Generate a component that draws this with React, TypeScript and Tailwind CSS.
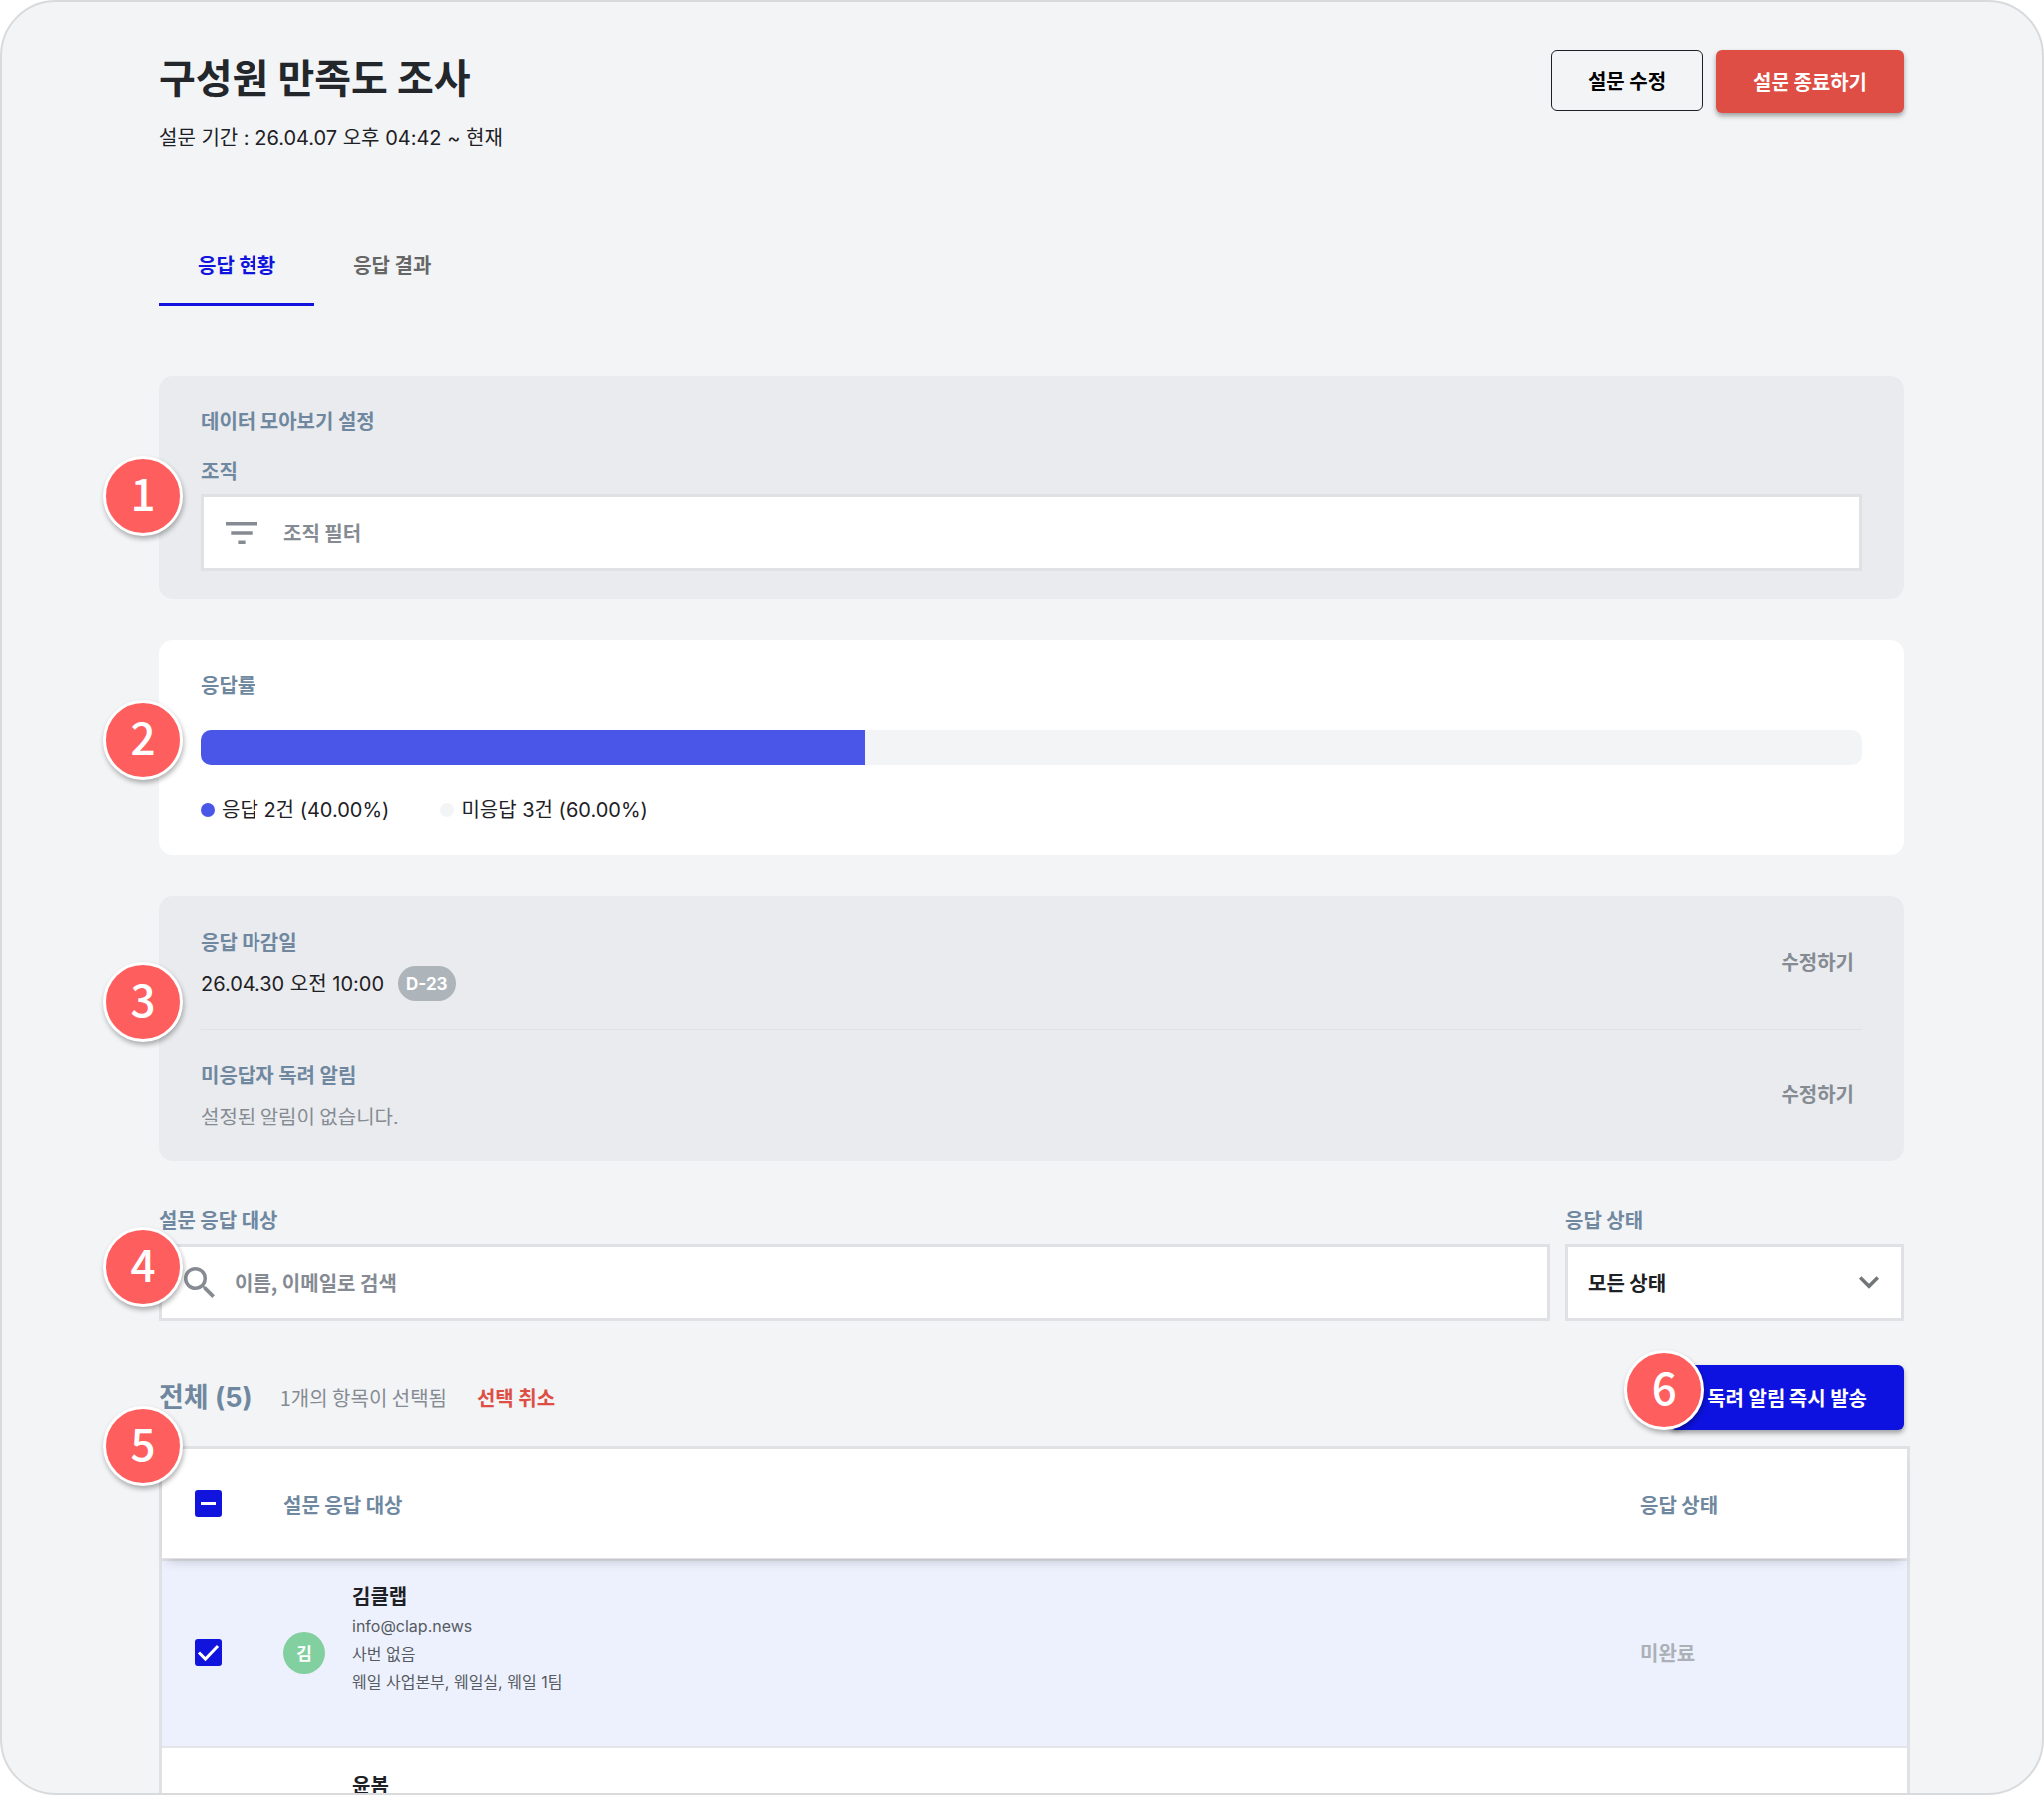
import { useEffect, useRef, useState } from 'react';

interface Member {
  id: number;
  name: string;
  details: string[];
  status?: string;
}

const members: Member[] = [
  {
    id: 1,
    name: '김클랩',
    details: ['info@clap.news', '사번 없음', '웨일 사업본부, 웨일실, 웨일 1팀'],
    status: '미완료',
  },
  { id: 2, name: '윤봄', details: [] },
];

const tabs = ['응답 현황', '응답 결과'];

function Marker({ n, className }: { n: number; className: string }) {
  return (
    <span
      className={`absolute z-20 flex h-20 w-20 items-center justify-center rounded-full border-3 border-white bg-[#ff5e5e] pb-2 text-[44px] leading-none font-medium text-white shadow-[1px_3px_5px_rgba(0,0,0,0.3)] ${className}`}
    >
      {n}
    </span>
  );
}

function Check({
  label,
  checked,
  indeterminate = false,
  onChange,
}: {
  label: string;
  checked: boolean;
  indeterminate?: boolean;
  onChange: () => void;
}) {
  const ref = useRef<HTMLInputElement>(null);

  useEffect(() => {
    if (ref.current) ref.current.indeterminate = indeterminate;
  }, [indeterminate]);

  return (
    <label className="relative block h-[27px] w-[27px]">
      <input
        ref={ref}
        type="checkbox"
        aria-label={label}
        checked={checked}
        onChange={onChange}
        className="block h-[27px] w-[27px] appearance-none rounded-[3px] border-3 border-[#8a8f96] checked:border-[#1014dd] checked:bg-[#1014dd] indeterminate:border-[#1014dd] indeterminate:bg-[#1014dd]"
      />
      <svg viewBox="0 0 27 27" className="pointer-events-none absolute inset-0 h-full w-full" fill="none" stroke="#fff" strokeWidth="3">
        {indeterminate ? <path d="M6 13.5h15" /> : checked ? <path d="M4 13.5l6.500 6.500L23 7" /> : null}
      </svg>
    </label>
  );
}

export default function App() {
  const [tab, setTab] = useState(0);
  const [selected, setSelected] = useState<number[]>([1]);

  const toggle = (id: number) =>
    setSelected(selected.includes(id) ? selected.filter(v => v !== id) : [...selected, id]);

  return (
    <div className="h-screen overflow-hidden rounded-[56px] border-2 border-[#d9dadc] bg-[#f2f4f6] pt-12 pr-[138px] pl-[157px] font-['Noto_Sans_CJK_KR',sans-serif] text-[20px] leading-[30px] text-[#1d2024]">
      <header className="flex items-start justify-between">
        <div>
          <h1 className="pt-0.5 text-[40px] leading-[48px] font-bold text-[#23272b]">구성원 만족도 조사</h1>
          <p className="mt-[23px] font-[Inter,'Noto_Sans_CJK_KR',sans-serif]">설문 기간 : 26.04.07 오후 04:42 ~ 현재</p>
        </div>
        <div className="flex items-start gap-[13px]">
          <button type="button" className="h-[61px] rounded-md border border-[#1d2024] px-9 font-bold text-black">
            설문 수정
          </button>
          <button type="button" className="h-[63px] rounded-md bg-[#de4e45] px-[37px] font-bold text-white shadow-[0_3px_5px_rgba(0,0,0,0.35)]">
            설문 종료하기
          </button>
        </div>
      </header>

      <nav className="mt-[76px] flex">
        {tabs.map((name, i) => (
          <button
            key={name}
            type="button"
            onClick={() => setTab(i)}
            className={`border-b-3 px-[39px] pt-[22px] pb-[23px] font-bold ${
              tab === i ? 'border-[#1014dd] text-[#1014dd]' : 'border-transparent text-[#666]'
            }`}
          >
            {name}
          </button>
        ))}
      </nav>

      <section className="relative mt-[70px] rounded-[14px] bg-[#e9ebee] px-[42px] pt-[30px] pb-7">
        <Marker n={1} className="top-20 -left-14" />
        <h2 className="font-bold text-[#70889f]">데이터 모아보기 설정</h2>
        <label htmlFor="org" className="mt-5 block font-bold text-[#70889f]">조직</label>
        <div className="mt-2 flex h-[77px] items-center border-3 border-[#dfe1e4] bg-white">
          <svg viewBox="0 0 32 22" className="ml-[22px] h-[22px] w-8 shrink-0" fill="#868b93">
            <path d="M0 0h32v3.600H0zM5.300 9.200h21.400v3.600H5.300zM12.400 18.400h7.200V22h-7.200z" />
          </svg>
          <input id="org" placeholder="조직 필터" className="ml-[26px] h-full w-full font-bold outline-none placeholder:text-[#868b93]" />
        </div>
      </section>

      <section className="relative mt-[41px] rounded-[14px] bg-white px-[42px] pt-[31px] pb-[30px]">
        <Marker n={2} className="top-[61px] -left-14" />
        <h2 className="font-bold text-[#70889f]">응답률</h2>
        <div className="mt-[30px] h-[35px] overflow-hidden rounded-[10px] bg-[#f2f4f6]">
          <div className="h-full w-2/5 bg-[#4a56e8]" />
        </div>
        <ul className="mt-[30px] flex gap-[51px] font-[Inter,'Noto_Sans_CJK_KR',sans-serif]">
          <li className="flex items-center gap-[7px]">
            <i className="h-3.5 w-3.5 rounded-full bg-[#4a56e8]" />
            응답 2건 (40.00%)
          </li>
          <li className="flex items-center gap-[7px]">
            <i className="h-3.5 w-3.5 rounded-full bg-[#f2f4f6]" />
            미응답 3건 (60.00%)
          </li>
        </ul>
      </section>

      <section className="relative mt-[41px] rounded-[14px] bg-[#e9ebee] px-[42px]">
        <Marker n={3} className="top-[66px] -left-14" />
        <div className="flex items-center justify-between border-b border-[#dfe1e5] pt-[31px] pb-7">
          <div>
            <h2 className="font-bold text-[#70889f]">응답 마감일</h2>
            <p className="mt-[9px] flex items-center gap-3.5 font-[Inter,'Noto_Sans_CJK_KR',sans-serif]">
              26.04.30 오전 10:00
              <span className="flex h-[35px] items-center rounded-full bg-[#adb4ba] px-2 text-[17px] font-bold text-white">D-23</span>
            </p>
          </div>
          <button type="button" className="px-2 pb-1 font-bold text-[#868b93]">수정하기</button>
        </div>
        <div className="flex items-center justify-between py-[30px]">
          <div>
            <h2 className="font-bold text-[#70889f]">미응답자 독려 알림</h2>
            <p className="mt-3 text-[#868b93]">설정된 알림이 없습니다.</p>
          </div>
          <button type="button" className="px-2 pb-1 font-bold text-[#868b93]">수정하기</button>
        </div>
      </section>

      <section className="relative mt-11 flex gap-[15px]">
        <Marker n={4} className="top-[22px] -left-14" />
        <div className="flex-1">
          <label htmlFor="search" className="block font-bold text-[#70889f]">설문 응답 대상</label>
          <div className="mt-[9px] flex h-[77px] items-center border-3 border-[#dfe1e4] bg-white">
            <svg viewBox="3 3 17.500 17.500" className="ml-[22px] h-[31px] w-[31px] shrink-0" fill="#868b93">
              <path d="M15.500 14h-.79l-.28-.27A6.471 6.471 0 0 0 16 9.500 6.500 6.500 0 1 0 9.500 16c1.610 0 3.090-.59 4.230-1.570l.27.28v.79l5 4.990L20.490 19l-4.990-5zm-6 0C7.010 14 5 11.990 5 9.500S7.010 5 9.500 5 14 7.010 14 9.500 11.990 14 9.500 14z" />
            </svg>
            <input id="search" placeholder="이름, 이메일로 검색" className="ml-5 h-full w-full font-bold outline-none placeholder:text-[#868b93]" />
          </div>
        </div>
        <div className="w-[340px]">
          <label htmlFor="status" className="block font-bold text-[#70889f]">응답 상태</label>
          <div className="relative mt-[9px]">
            <select id="status" className="block h-[77px] w-full appearance-none border-3 border-[#dfe1e4] bg-white px-5 font-bold">
              <option>모든 상태</option>
              <option>완료</option>
              <option>미완료</option>
            </select>
            <svg viewBox="0 0 20 13" className="pointer-events-none absolute top-8 right-[25px] h-[13px] w-5" fill="none" stroke="#737679" strokeWidth="3.500">
              <path d="M1.200 1.500l8.800 8.800 8.800-8.800" />
            </svg>
          </div>
        </div>
      </section>

      <section className="relative mt-11">
        <Marker n={5} className="top-[41px] -left-14" />
        <div className="flex items-center justify-between">
          <div className="flex items-center">
            <h2 className="font-[Inter,'Noto_Sans_CJK_KR',sans-serif] text-[27px] font-bold text-[#70889f]">전체 (5)</h2>
            <span className="ml-7 text-[#868b93]">{selected.length}개의 항목이 선택됨</span>
            <button type="button" onClick={() => setSelected([])} className="ml-[30px] font-bold text-[#de4e45]">선택 취소</button>
          </div>
          <div className="relative">
            <Marker n={6} className="-top-[15px] -left-[46px]" />
            <button type="button" className="block h-[65px] rounded-md bg-[#0e12e0] px-[37px] font-bold text-white shadow-[0_3px_5px_rgba(0,0,0,0.35)]">
              독려 알림 즉시 발송
            </button>
          </div>
        </div>

        <div className="mt-4 -mr-1.5 border-3 border-[#dfe1e5] bg-white">
          <table className="w-full table-fixed border-collapse text-left">
            <thead className="relative z-10 shadow-[0_8px_10px_-6px_rgba(60,60,80,0.25)]">
              <tr className="h-[110px] border-b-3 border-[#dfe1e5] bg-white">
                <th className="w-[122px] pl-[33px]">
                  <Check
                    label="전체 선택"
                    checked={selected.length === members.length}
                    indeterminate={selected.length > 0 && selected.length < members.length}
                    onChange={() => setSelected(selected.length === members.length ? [] : members.map(m => m.id))}
                  />
                </th>
                <th className="pt-1 font-bold text-[#70889f]">설문 응답 대상</th>
                <th className="w-[268px] pt-1 font-bold text-[#70889f]">응답 상태</th>
              </tr>
            </thead>
            <tbody>
              {members.map(m => (
                <tr key={m.id} className={`h-[189px] border-b-2 border-[#e3e5e9] ${selected.includes(m.id) ? 'bg-[#edf1fd]' : 'bg-white'}`}>
                  <td className="pl-[33px]">
                    <Check label={`${m.name} 선택`} checked={selected.includes(m.id)} onChange={() => toggle(m.id)} />
                  </td>
                  <td>
                    <div className="flex items-center gap-[27px]">
                      <span className="flex h-[42px] w-[42px] items-center justify-center rounded-full bg-[#82cf9f] text-[17px] font-bold text-white">
                        {m.name[0]}
                      </span>
                      <div className="h-[142px] font-[Inter,'Noto_Sans_CJK_KR',sans-serif] text-[16px] leading-7 text-[#565b62]">
                        <p className="text-[20px] leading-[30px] font-bold text-[#1d2024]">{m.name}</p>
                        {m.details.map(line => (
                          <p key={line}>{line}</p>
                        ))}
                      </div>
                    </div>
                  </td>
                  <td className="font-bold text-[#acb1b8]">{m.status}</td>
                </tr>
              ))}
            </tbody>
          </table>
        </div>
      </section>
    </div>
  );
}
